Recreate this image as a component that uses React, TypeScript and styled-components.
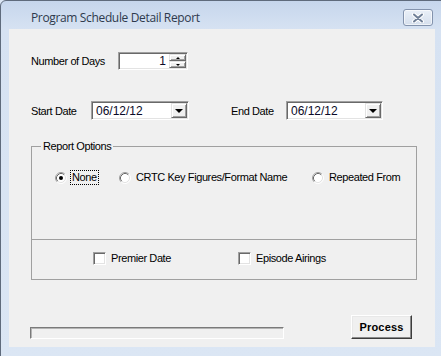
import React from "react";
import styled, { createGlobalStyle } from "styled-components";

const GlobalStyle = createGlobalStyle`
  html, body {
    margin: 0;
    padding: 0;
    overflow: hidden;
    background: #dbe6f4;
  }
`;

const Screen = styled.div`
  width: 441px;
  height: 356px;
  overflow: hidden;
`;

const Window = styled.div`
  width: 448px;
  height: 362px;
  box-sizing: border-box;
  border: 1px solid #5f6b7c;
  border-radius: 6px 6px 0 0;
  background: linear-gradient(#c6d6ec, #d6e2f2 28px, #dbe6f4);
  display: flex;
  flex-direction: column;
  font-family: "Liberation Sans", Arial, sans-serif;
  font-size: 11px;
  color: #000;
`;

const TitleBar = styled.div`
  height: 28px;
  display: flex;
  align-items: flex-start;
  justify-content: space-between;
  padding: 0 14px 0 30px;
`;

const TitleText = styled.div`
  font-family: "Open Sans", "Noto Sans", sans-serif;
  font-size: 12px;
  letter-spacing: -0.35px;
  line-height: 16px;
  padding-top: 9px;
  color: #2e3a4d;
`;

const CloseButton = styled.div`
  margin-top: 8px;
  width: 30px;
  height: 17px;
  box-sizing: border-box;
  border: 1px solid #8393ad;
  border-radius: 3px;
  background: linear-gradient(#eaf0f8, #d5dfed);
  box-shadow: inset 0 0 0 1px rgba(255, 255, 255, 0.6);
  display: flex;
  align-items: center;
  justify-content: center;
`;

const Client = styled.div`
  margin-left: 8px;
  width: 426px;
  height: 318px;
  box-sizing: border-box;
  background: #f0f0f0;
  padding: 23px 0 0 22px;
  display: flex;
  flex-direction: column;
  letter-spacing: -0.4px;
`;

const Row = styled.div<{ $top?: number }>`
  display: flex;
  align-items: center;
  margin-top: ${(p) => p.$top ?? 0}px;
`;

const Label = styled.div<{ $width: number; $left?: number }>`
  width: ${(p) => p.$width}px;
  margin-left: ${(p) => p.$left ?? 0}px;
  white-space: nowrap;
`;

const Sunken = styled.div<{ $width: number; $height: number }>`
  width: ${(p) => p.$width}px;
  height: ${(p) => p.$height}px;
  box-sizing: border-box;
  background: #fff;
  border: 1px solid;
  border-color: #a0a0a0 #fff #fff #a0a0a0;
  box-shadow: inset 1px 1px #696969, inset -1px -1px #e3e3e3;
  padding: 1px;
  display: flex;
  align-items: center;
`;

const FieldValue = styled.div<{ $align?: string }>`
  flex: 1;
  text-align: ${(p) => p.$align ?? "left"};
  padding: 0 3px;
  font-size: 12px;
  letter-spacing: 0;
  color: #0a0a28;
`;

const SpinStack = styled.div`
  width: 17px;
  height: 14px;
  display: flex;
  flex-direction: column;
`;

const RaisedButton = styled.div<{ $w: number; $h: number }>`
  width: ${(p) => p.$w}px;
  height: ${(p) => p.$h}px;
  box-sizing: border-box;
  background: #f0f0f0;
  border: 1px solid;
  border-color: #e3e3e3 #696969 #696969 #e3e3e3;
  box-shadow: inset 1px 1px #fff, inset -1px -1px #a0a0a0;
  display: flex;
  align-items: center;
  justify-content: center;
`;

const Arrow = styled.div<{ $up?: boolean; $size: number }>`
  width: 0;
  height: 0;
  border-left: ${(p) => p.$size}px solid transparent;
  border-right: ${(p) => p.$size}px solid transparent;
  ${(p) =>
    p.$up
      ? `border-bottom: ${p.$size}px solid #000;`
      : `border-top: ${p.$size}px solid #000;`}
`;

const GroupTop = styled.div`
  position: relative;
  margin-top: 26px;
  width: 386px;
  height: 94px;
  box-sizing: border-box;
  border: 1px solid #a0a0a0;
`;

const GroupBottom = styled.div`
  width: 386px;
  height: 40px;
  box-sizing: border-box;
  border: 1px solid #a0a0a0;
  border-top: none;
  padding: 12px 0 0 61px;
  display: flex;
`;

const Legend = styled.div`
  position: absolute;
  top: -7px;
  left: 9px;
  padding: 0 2px;
  line-height: 13px;
  background: #f0f0f0;
`;

const RadioRow = styled.div`
  display: flex;
  margin: 24px 0 0 23px;
`;

const Choice = styled.div<{ $width?: number }>`
  ${(p) => (p.$width ? `width: ${p.$width}px;` : "")}
  display: flex;
  align-items: center;
  gap: 3px;
  height: 13px;
  white-space: nowrap;
`;

const FocusText = styled.span<{ $focused?: boolean }>`
  line-height: 13px;
  padding: 0 1px;
  border: 1px dotted ${(p) => (p.$focused ? "#000" : "transparent")};
`;

const CheckBox = styled.div`
  width: 13px;
  height: 13px;
  box-sizing: border-box;
  background: #fff;
  border: 1px solid;
  border-color: #a0a0a0 #fff #fff #a0a0a0;
  box-shadow: inset 1px 1px #696969, inset -1px -1px #e3e3e3;
`;

const BottomRow = styled.div`
  display: flex;
  align-items: flex-end;
  margin: 35px 0 0 -1px;
`;

const Progress = styled.div`
  width: 254px;
  height: 12px;
  box-sizing: border-box;
  border: 1px solid;
  border-color: #7a7a7a #fff #fff #7a7a7a;
  box-shadow: inset 1px 1px #b4b4b4;
`;

const PushButton = styled.div`
  margin-left: 67px;
  width: 61px;
  height: 24px;
  box-sizing: border-box;
  border: 1px solid;
  border-color: #fff #3c3c3c #3c3c3c #fff;
  box-shadow: inset -1px -1px #8a8a8a, inset 1px 1px #e8e8e8;
  display: flex;
  align-items: center;
  justify-content: center;
  font-weight: bold;
  letter-spacing: 0.2px;
`;

function Radio({ checked }: { checked?: boolean }) {
  return (
    <svg width="12" height="12" viewBox="0 0 12 12">
      <circle cx="6" cy="6" r="5" fill="#fff" />
      <path d="M2.11 9.89 A5.5 5.5 0 0 1 9.89 2.11" fill="none" stroke="#a0a0a0" />
      <path d="M9.89 2.11 A5.5 5.5 0 0 1 2.11 9.89" fill="none" stroke="#fff" />
      <path d="M2.82 9.18 A4.5 4.5 0 0 1 9.18 2.82" fill="none" stroke="#696969" />
      <path d="M9.18 2.82 A4.5 4.5 0 0 1 2.82 9.18" fill="none" stroke="#e3e3e3" />
      {checked && <circle cx="6" cy="6" r="2" fill="#000" />}
    </svg>
  );
}

function DateCombo({ width, value }: { width: number; value: string }) {
  return (
    <Sunken $width={width} $height={19}>
      <FieldValue>{value}</FieldValue>
      <RaisedButton $w={16} $h={15}>
        <Arrow $size={4} />
      </RaisedButton>
    </Sunken>
  );
}

export default function App() {
  return (
    <Screen>
      <GlobalStyle />
      <Window>
        <TitleBar>
          <TitleText>Program Schedule Detail Report</TitleText>
          <CloseButton>
            <svg width="14" height="10" viewBox="0 0 14 10">
              <path d="M3 1.5 L11 8.5 M11 1.5 L3 8.5" stroke="#fff" strokeWidth="4" strokeLinecap="round" />
              <path d="M3 1.5 L11 8.5 M11 1.5 L3 8.5" stroke="#6f7f97" strokeWidth="2" strokeLinecap="round" />
            </svg>
          </CloseButton>
        </TitleBar>
        <Client>
          <Row>
            <Label $width={87}>Number of Days</Label>
            <Sunken $width={70} $height={18}>
              <FieldValue $align="right">1</FieldValue>
              <SpinStack>
                <RaisedButton $w={17} $h={7}>
                  <Arrow $up $size={2} />
                </RaisedButton>
                <RaisedButton $w={17} $h={7}>
                  <Arrow $size={2} />
                </RaisedButton>
              </SpinStack>
            </Sunken>
          </Row>

          <Row $top={31}>
            <Label $width={60}>Start Date</Label>
            <DateCombo width={98} value="06/12/12" />
            <Label $width={55} $left={42}>End Date</Label>
            <DateCombo width={97} value="06/12/12" />
          </Row>

          <GroupTop>
            <Legend>Report Options</Legend>
            <RadioRow>
              <Choice $width={64}>
                <Radio checked />
                <FocusText $focused>None</FocusText>
              </Choice>
              <Choice $width={193}>
                <Radio />
                <FocusText>CRTC Key Figures/Format Name</FocusText>
              </Choice>
              <Choice>
                <Radio />
                <FocusText>Repeated From</FocusText>
              </Choice>
            </RadioRow>
          </GroupTop>
          <GroupBottom>
            <Choice $width={145}>
              <CheckBox />
              <FocusText>Premier Date</FocusText>
            </Choice>
            <Choice>
              <CheckBox />
              <FocusText>Episode Airings</FocusText>
            </Choice>
          </GroupBottom>

          <BottomRow>
            <Progress />
            <PushButton>Process</PushButton>
          </BottomRow>
        </Client>
      </Window>
    </Screen>
  );
}
